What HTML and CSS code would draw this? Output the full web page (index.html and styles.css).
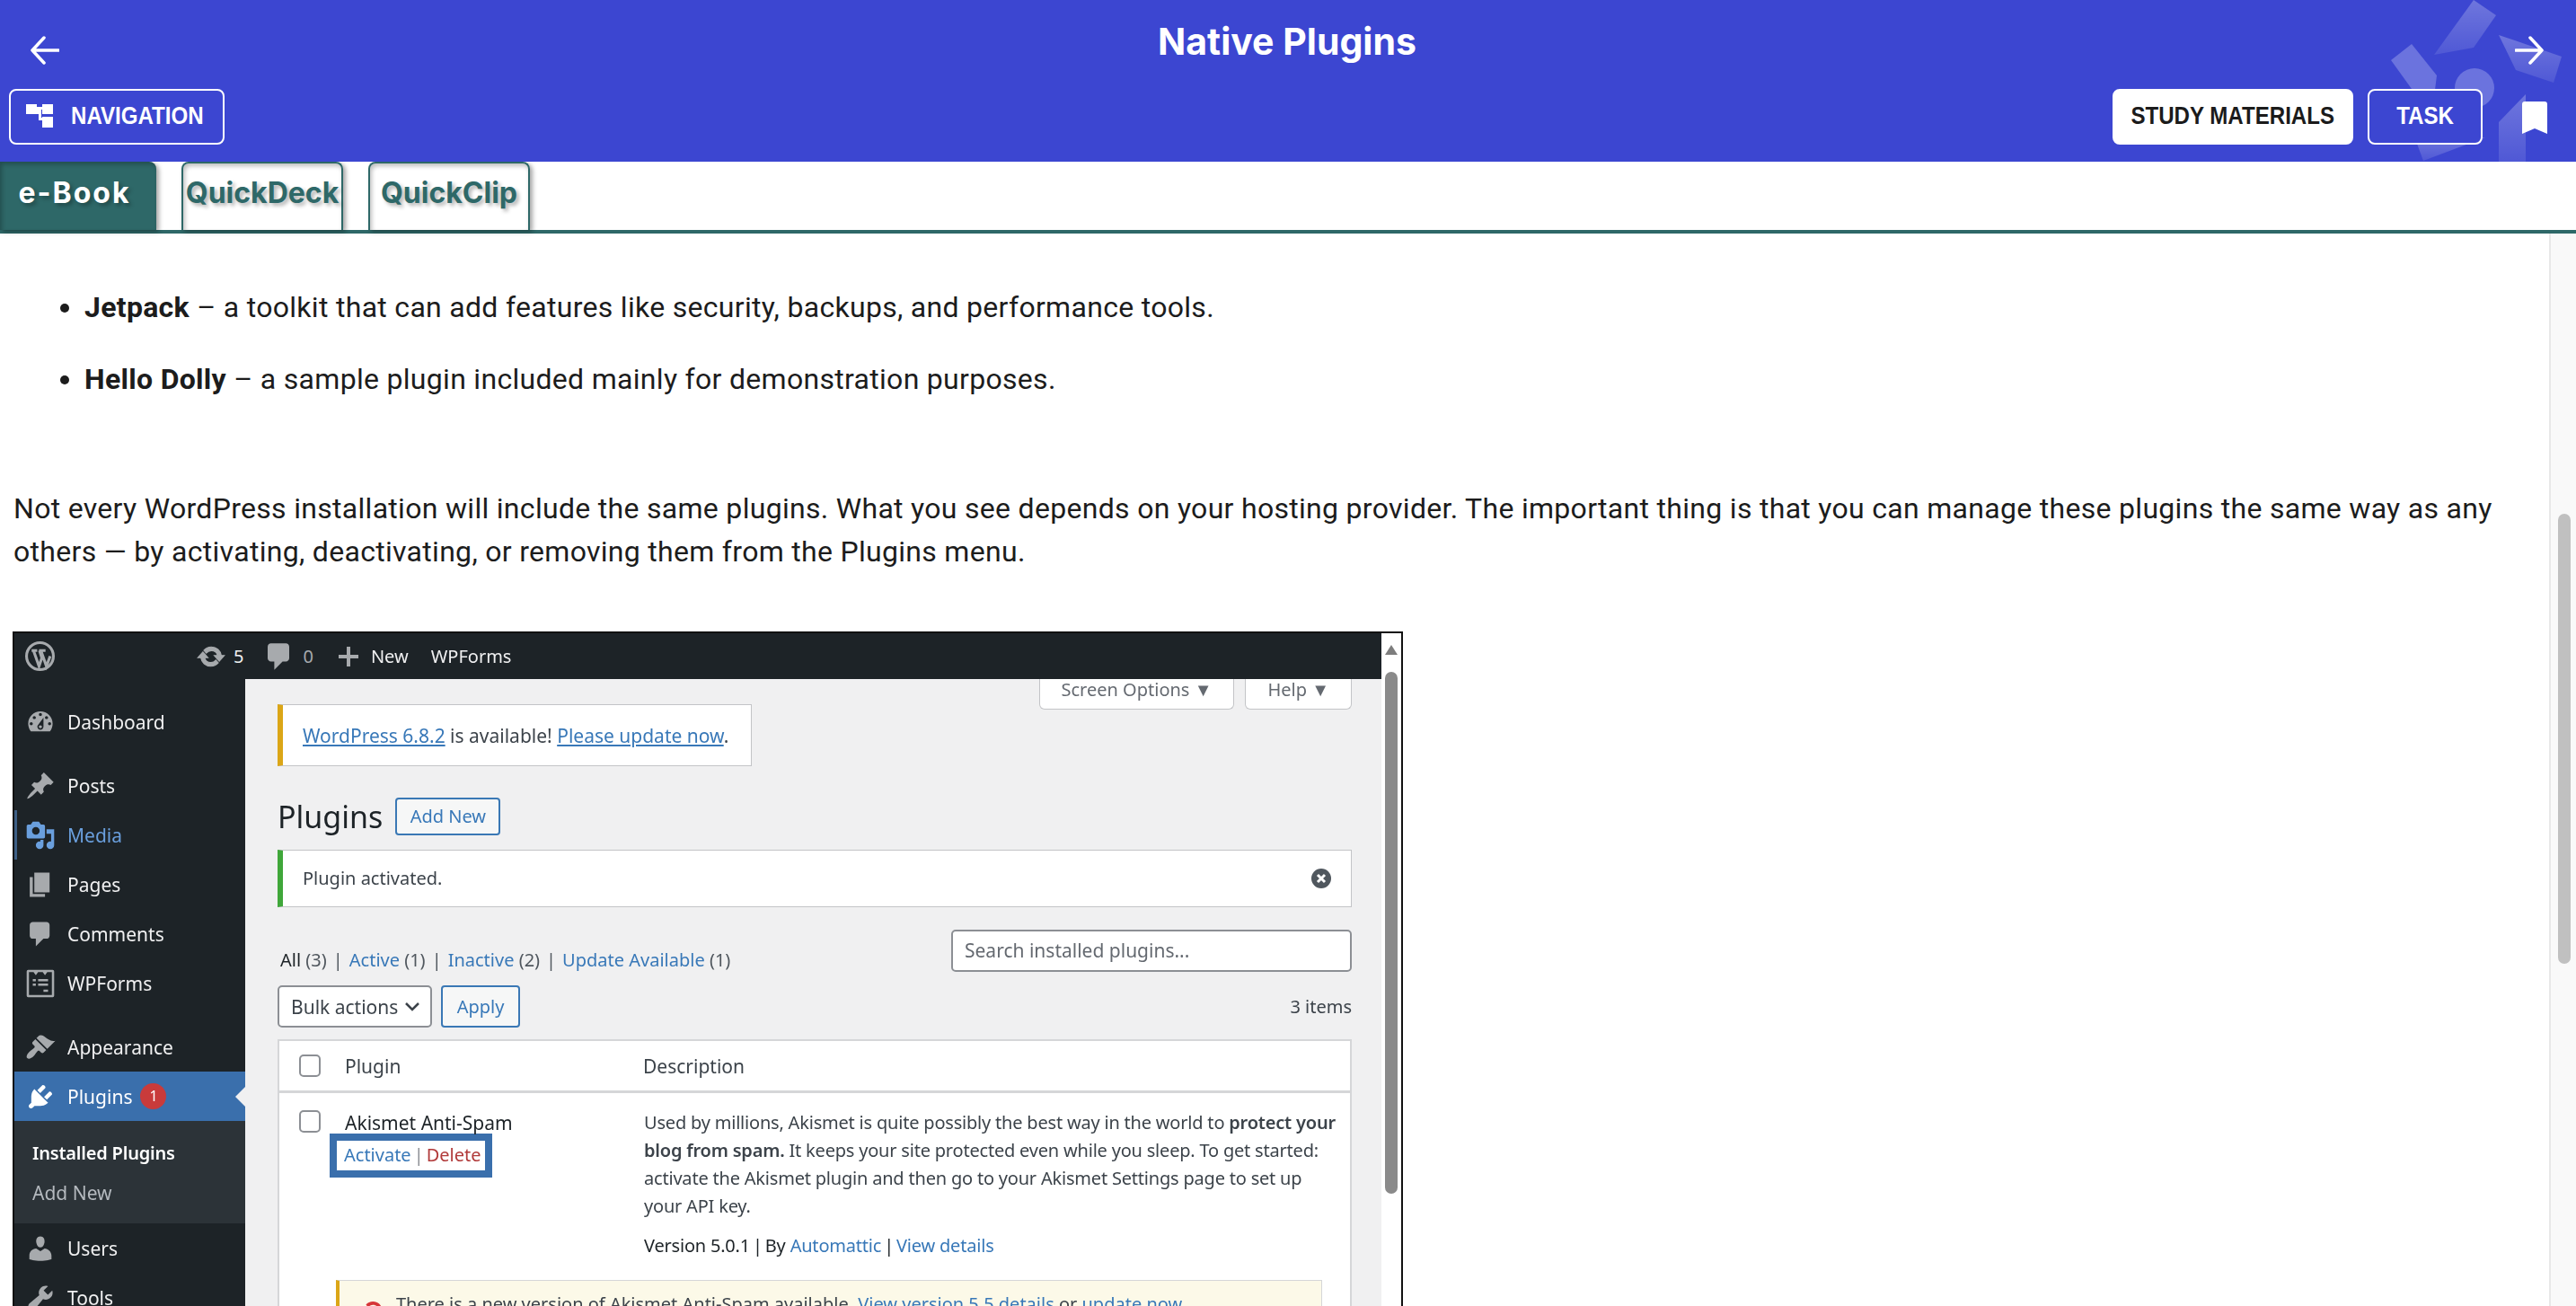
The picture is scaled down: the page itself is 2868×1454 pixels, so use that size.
FILE: index.html
```html
<!DOCTYPE html>
<html lang="en">

<head>
  <meta charset="UTF-8" />
  <meta name="viewport" content="width=device-width, initial-scale=1.0" />
  <title>Native Plugins</title>
  <link rel="stylesheet" href="styles.css">
</head>

<body>
  <header class="topbar">
    <svg class="decor" viewBox="0 0 230 180" aria-hidden="true">
      <defs>
        <linearGradient id="fade" x1="0" y1="0" x2="0" y2="1">
          <stop offset="0" stop-color="#fff" stop-opacity="0.26" />
          <stop offset="1" stop-color="#fff" stop-opacity="0.1" />
        </linearGradient>
      </defs>
      <path d="M116 0l25 17-25 36-44 8z" fill="url(#fade)" />
      <path d="M144 39l70 24-9 29-42-14z" fill="url(#fade)" />
      <path d="M47 49l28 35-2 16-26-1-23-32z" fill="#6b73de" />
      <circle cx="117" cy="98" r="22" fill="#6b73de" />
      <path d="M174 105v75h-30v-44z" fill="url(#fade)" />
      <path d="M129 153l-69 26-7-19z" fill="url(#fade)" />
    </svg>
    <div class="toprow">
      <button class="arrow" aria-label="Back">
        <svg viewBox="0 0 32 32" width="32" height="32"><path d="M31 16H2M15 2L2 16l13 14" /></svg>
      </button>
      <h1>Native Plugins</h1>
      <button class="arrow" aria-label="Next">
        <svg viewBox="0 0 32 32" width="32" height="32"><path d="M1 16h29M17 2l13 14-13 14" /></svg>
      </button>
    </div>
    <div class="actions">
      <button class="btn btn-nav">
        <svg viewBox="0 0 30 26" width="30" height="26"><path d="M0 0h12v3h6V0h12v11H18V6h-1v9h1v-1h12v12H18v-8h-4V11h-2H0z" /></svg>
        <span>NAVIGATION</span>
      </button>
      <div class="actions-right">
        <button class="btn btn-solid"><span>STUDY MATERIALS</span></button>
        <button class="btn btn-task"><span>TASK</span></button>
        <svg class="bookmark" viewBox="0 0 28 36" width="28" height="36"><path d="M3 0h22a3 3 0 0 1 3 3v33l-14-6-14 6V3a3 3 0 0 1 3-3z" /></svg>
      </div>
    </div>
  </header>

  <nav class="tabs">
    <a class="tab active">e-Book</a>
    <a class="tab">QuickDeck</a>
    <a class="tab">QuickClip</a>
  </nav>

  <main class="page">
    <article class="content">
      <ul class="bullets">
        <li><b>Jetpack</b> – a toolkit that can add features like security, backups, and performance tools.</li>
        <li><b>Hello Dolly</b> – a sample plugin included mainly for demonstration purposes.</li>
      </ul>
      <p class="lead">Not every WordPress installation will include the same plugins. What you see depends on your hosting provider. The important thing is that you can manage these plugins the same way as any others — by activating, deactivating, or removing them from the Plugins menu.</p>

      <figure class="shot">
        <div class="wp">
          <div class="adminbar">
            <svg class="wp-logo" viewBox="0 0 32 32" width="33" height="33"><circle cx="16" cy="16" r="14.500" /><path d="M7 10h6M15 10h7M9 10l6 17 3-9-2.500-8M17 10l6 17 4-11" /></svg>
            <svg class="bar-update" viewBox="0 0 20 20" width="32" height="32"><path d="M10.200 3.280c3.530 0 6.430 2.610 6.920 6h2.080l-3.500 4-3.500-4h2.320c-.45-1.970-2.210-3.450-4.320-3.450-1.450 0-2.730.71-3.540 1.780L4.950 5.660C6.230 4.200 8.110 3.280 10.200 3.280zm-.4 13.440c-3.520 0-6.430-2.610-6.920-6H.8l3.500-4c1.170 1.330 2.330 2.670 3.500 4H5.480c.45 1.970 2.210 3.450 4.320 3.450 1.450 0 2.730-.71 3.540-1.780l1.710 1.950c-1.280 1.460-3.150 2.380-5.250 2.380z" /></svg>
            <span class="bar-num">5</span>
            <svg class="bar-comment" viewBox="3 2 13 16" width="24" height="30"><path d="M5 2h9c1.100 0 2 .9 2 2v7c0 1.100-.9 2-2 2h-2l-5 5v-5H5c-1.100 0-2-.9-2-2V4c0-1.100.9-2 2-2z" /></svg>
            <span class="bar-num dim">0</span>
            <svg class="bar-plus" viewBox="0 0 22 22" width="22" height="22"><path d="M9 0h4v9h9v4h-9v9H9v-9H0V9h9z" /></svg>
            <span class="bar-new">New</span>
            <span class="bar-forms">WPForms</span>
          </div>
          <div class="wp-body">
            <aside class="side">
              <div class="side-item"><svg viewBox="0 0 20 20"><path d="M3.760 16h12.480c1.100-1.370 1.760-3.110 1.760-5 0-4.420-3.580-8-8-8s-8 3.580-8 8c0 1.890.66 3.630 1.760 5zM10 4c.55 0 1 .45 1 1s-.45 1-1 1-1-.45-1-1 .45-1 1-1zM6 6c.55 0 1 .45 1 1s-.45 1-1 1-1-.45-1-1 .45-1 1-1zm8 0c.55 0 1 .45 1 1s-.45 1-1 1-1-.45-1-1 .45-1 1-1zm-5.370 5.550L12 7v6c0 1.100-.9 2-2 2s-2-.9-2-2c0-.57.24-1.080.63-1.450zM4 10c.55 0 1 .45 1 1s-.45 1-1 1-1-.45-1-1 .45-1 1-1zm12 0c.55 0 1 .45 1 1s-.45 1-1 1-1-.45-1-1 .45-1 1-1zm-5 3c0-.55-.45-1-1-1s-1 .45-1 1 .45 1 1 1 1-.45 1-1z" /></svg>Dashboard</div>
              <div class="side-item gap"><svg viewBox="0 0 20 20"><path d="M10.440 3.020l1.820-1.820 6.360 6.350-1.830 1.820c-1.050-.68-2.480-.57-3.410.36l-.75.75c-.92.93-1.040 2.350-.35 3.410l-1.830 1.820-2.410-2.410-2.800 2.790c-.42.42-3.380 2.710-3.800 2.290s1.860-3.390 2.280-3.810l2.790-2.790L4.100 9.360l1.830-1.820c1.050.69 2.480.57 3.400-.36l.75-.75c.93-.92 1.050-2.350.36-3.410z" /></svg>Posts</div>
              <div class="side-item media"><svg viewBox="0 0 20 20"><path d="M13 11V4c0-.55-.45-1-1-1h-1.670L9 1H5L3.670 3H2c-.55 0-1 .45-1 1v7c0 .55.45 1 1 1h10c.55 0 1-.45 1-1zM7 4.500c1.380 0 2.500 1.120 2.500 2.500S8.380 9.500 7 9.500 4.500 8.380 4.500 7 5.620 4.500 7 4.500zM14 6h5v10.500c0 1.380-1.120 2.500-2.500 2.500S14 17.880 14 16.500s1.120-2.500 2.500-2.500c.17 0 .34.02.5.05V9h-3V6zm-4 8.050V13h2v3.500c0 1.380-1.120 2.500-2.500 2.500S7 17.880 7 16.500 8.120 14 9.500 14c.17 0 .34.02.5.05z" /></svg>Media</div>
              <div class="side-item"><svg viewBox="0 0 20 20"><path d="M6 15V2h10v13H6zm-1 1h8v2H3V5h2v11z" /></svg>Pages</div>
              <div class="side-item"><svg viewBox="0 0 20 20"><path d="M5 2h9c1.100 0 2 .9 2 2v7c0 1.100-.9 2-2 2h-2l-5 5v-5H5c-1.100 0-2-.9-2-2V4c0-1.100.9-2 2-2z" /></svg>Comments</div>
              <div class="side-item"><svg viewBox="0 0 20 20"><path fill-rule="evenodd" d="M2 1h16a1 1 0 0 1 1 1v16a1 1 0 0 1-1 1H2a1 1 0 0 1-1-1V2a1 1 0 0 1 1-1zm.500 1.500v15h15v-15h-3L13 4.500 11.500 2.500h-3L7 4.500 5.500 2.500zM5 7h2v1.500H5zm3.500 0H15v1.500H8.500zM5 10h2v1.500H5zm3.500 0H15v1.500H8.500zM12 14h3v1.500h-3z" /></svg>WPForms</div>
              <div class="side-item gap"><svg viewBox="0 0 20 20"><path d="M14.480 11.060L7.410 3.990l1.500-1.500c.5-.56 2.300-.47 3.510.32 1.210.8 1.430 1.280 2.910 2.100 1.180.64 2.450 1.260 4.450.85zm-.71.71L6.700 4.700 4.930 6.470c-.39.39-.39 1.020 0 1.410l1.060 1.060c.39.39.39 1.030 0 1.420-.6.6-1.430 1.110-2.210 1.690-.35.26-.7.53-1.010.84C1.430 14.230.4 16.080 1.400 17.070c.99 1 2.840-.03 4.180-1.360.31-.31.58-.66.85-1.020.57-.78 1.080-1.610 1.690-2.210.39-.39 1.020-.39 1.410 0l1.060 1.060c.39.39 1.020.39 1.410 0z" /></svg>Appearance</div>
              <div class="side-item current"><svg viewBox="0 0 20 20"><path d="M13.110 4.360L9.870 7.600 8 5.730l3.240-3.240c.35-.34 1.050-.2 1.560.32.52.51.66 1.210.31 1.550zm-8 1.770l.91-1.120 9.010 9.010-1.190.84c-.71.71-2.630 1.160-3.820 1.160H6.140L4.900 17.260c-.59.59-1.540.59-2.120 0-.59-.58-.59-1.530 0-2.120l1.240-1.240v-3.880c0-1.130.4-3.190 1.090-3.890zm7.260 3.970l3.240-3.240c.34-.35 1.040-.21 1.550.31.52.51.66 1.210.31 1.550l-3.240 3.250z" /></svg>Plugins<span class="count">1</span></div>
              <div class="submenu">
                <div class="sub-item strong">Installed Plugins</div>
                <div class="sub-item">Add New</div>
              </div>
              <div class="side-item"><svg viewBox="0 0 20 20"><path d="M10 9.250c-2.270 0-2.730-3.440-2.730-3.440C7 4.020 7.820 2 9.970 2c2.160 0 2.980 2.020 2.710 3.810 0 0-.41 3.440-2.680 3.440zm0 2.570L12.720 10c2.390 0 4.520 2.330 4.520 4.530v2.490s-3.650 1.130-7.240 1.130c-3.650 0-7.240-1.130-7.240-1.130v-2.490c0-2.250 1.940-4.480 4.470-4.480z" /></svg>Users</div>
              <div class="side-item"><svg viewBox="0 0 20 20"><path d="M16.680 9.770c-1.340 1.340-3.300 1.670-4.950.99l-5.410 6.520c-.99.99-2.590.99-3.580 0s-.99-2.590 0-3.570l6.520-5.420c-.68-1.650-.35-3.610.99-4.950 1.280-1.280 3.120-1.620 4.720-1.060l-2.890 2.890 2.820 2.820 2.860-2.870c.53 1.580.18 3.390-1.080 4.650z" /></svg>Tools</div>
            </aside>

            <section class="wp-main">
              <div class="screen-tabs">
                <span class="screen-tab">Screen Options ▼</span>
                <span class="screen-tab">Help ▼</span>
              </div>
              <div class="notice notice-update"><a>WordPress 6.8.2</a> is available! <a>Please update now</a>.</div>
              <div class="title-row">
                <h2>Plugins</h2>
                <span class="wp-btn add-new">Add New</span>
              </div>
              <div class="notice notice-ok">
                <span>Plugin activated.</span>
                <svg viewBox="0 0 22 22" width="22" height="22"><circle cx="11" cy="11" r="11" fill="#50575e" /><path d="M7 7l8 8M15 7l-8 8" stroke="#fff" stroke-width="3" /></svg>
              </div>
              <div class="filter-row">
                <div class="filters"><b>All</b> (3)<span class="sep">|</span><a>Active</a> (1)<span class="sep">|</span><a>Inactive</a> (2)<span class="sep">|</span><a>Update Available</a> (1)</div>
                <div class="search">Search installed plugins...</div>
              </div>
              <div class="bulk-row">
                <span class="select">Bulk actions
                  <svg viewBox="0 0 16 10" width="16" height="10"><path d="M1 1l7 7 7-7" /></svg>
                </span>
                <span class="wp-btn apply">Apply</span>
                <span class="items">3 items</span>
              </div>
              <div class="plugin-table">
                <div class="table-head">
                  <i class="check"></i>
                  <span class="col-name">Plugin</span>
                  <span>Description</span>
                </div>
                <div class="table-row">
                  <i class="check check-row"></i>
                  <div class="col-name">
                    <div class="plugin-name">Akismet Anti-Spam</div>
                    <div class="row-actions"><a>Activate</a><span class="tight">|</span><span class="delete">Delete</span></div>
                  </div>
                  <div class="plugin-desc">
                    <p>Used by millions, Akismet is quite possibly the best way in the world to <b>protect your<br>blog from spam.</b> It keeps your site protected even while you sleep. To get started:<br>activate the Akismet plugin and then go to your Akismet Settings page to set up<br>your API key.</p>
                    <p class="version">Version 5.0.1<span class="tight">|</span>By <a>Automattic</a><span class="tight">|</span><a>View details</a></p>
                  </div>
                </div>
                <div class="update-note">
                  <svg viewBox="0 0 20 20" width="30" height="30"><path d="M10.200 3.280c3.530 0 6.430 2.610 6.920 6h2.080l-3.500 4-3.500-4h2.320c-.45-1.970-2.210-3.450-4.320-3.450-1.450 0-2.730.71-3.540 1.780L4.950 5.660C6.230 4.200 8.110 3.280 10.200 3.280zm-.4 13.440c-3.520 0-6.430-2.610-6.920-6H.8l3.500-4c1.170 1.330 2.330 2.670 3.500 4H5.480c.45 1.970 2.210 3.450 4.320 3.450 1.450 0 2.730-.71 3.540-1.780l1.710 1.950c-1.280 1.460-3.150 2.380-5.250 2.380z" /></svg>
                  <span>There is a new version of Akismet Anti-Spam available. <a>View version 5.5 details</a> or <a>update now</a>.</span>
                </div>
              </div>
            </section>
          </div>
        </div>
        <div class="shot-scroll">
          <i class="up"></i>
          <i class="thumb"></i>
        </div>
      </figure>
    </article>

    <div class="scroll">
      <i class="scroll-thumb"></i>
    </div>
  </main>
</body>

</html>
```

FILE: styles.css
```css
* {
  margin: 0;
  padding: 0;
  box-sizing: border-box;
}

html,
body {
  height: 100vh;
  overflow: hidden;
}

body {
  display: flex;
  flex-direction: column;
  background: #fff;
  color: #1c1c1c;
  font-family: Roboto, sans-serif;
}

button {
  font-family: inherit;
  cursor: pointer;
}

/* top bar */
.topbar {
  position: relative;
  height: 180px;
  flex-shrink: 0;
  background: #3c46d1;
  overflow: hidden;
}

.decor {
  position: absolute;
  top: 0;
  right: 0;
  width: 230px;
  height: 180px;
}

.toprow {
  position: relative;
  display: flex;
  justify-content: space-between;
  height: 99px;
  padding: 40px 36px 0 34px;
}

.toprow h1 {
  margin-top: -18px;
  color: #fff;
  font-family: Inter, sans-serif;
  font-size: 41px;
  font-weight: 700;
  line-height: 48px;
}

.arrow {
  width: 32px;
  height: 32px;
  background: none;
  border: 0;
}

.arrow path {
  fill: none;
  stroke: #fff;
  stroke-width: 3.500;
  stroke-linecap: round;
  stroke-linejoin: round;
}

.actions {
  position: relative;
  display: flex;
  justify-content: space-between;
  padding: 0 32px 0 10px;
}

.actions-right {
  display: flex;
  align-items: center;
  gap: 16px;
}

.btn {
  display: flex;
  align-items: center;
  justify-content: center;
  height: 62px;
  padding-bottom: 3px;
  border: 2px solid #fff;
  border-radius: 8px;
  background: #3c46d1;
  color: #fff;
  font-family: "Liberation Sans", sans-serif;
  font-size: 28px;
  font-weight: 700;
  white-space: nowrap;
}

/* the buttons use a condensed face, no such font installed */
.btn span {
  display: inline-block;
  transform: scaleX(0.86);
}

.btn-nav {
  justify-content: flex-start;
  width: 240px;
  padding-left: 17px;
  gap: 20px;
}

.btn-nav span {
  transform-origin: left center;
}

.btn-nav svg {
  fill: #fff;
  flex-shrink: 0;
}

.btn-solid {
  width: 268px;
  background: #fff;
  color: #1b1b1b;
}

.btn-task {
  width: 128px;
}

.bookmark {
  margin: 2px 0 0 28px;
  fill: #fff;
}

/* tabs */
.tabs {
  display: flex;
  flex-shrink: 0;
  gap: 28px;
  height: 80px;
  border-bottom: 4px solid #2e6868;
}

.tab {
  width: 180px;
  height: 76px;
  padding-top: 10px;
  border: 2px solid #2e6868;
  border-bottom-width: 0;
  border-radius: 8px 8px 0 0;
  box-shadow: 3px 2px 5px rgba(0, 0, 0, 0.35), inset 2px 3px 5px rgba(0, 0, 0, 0.25);
  color: #2e6868;
  font-family: Inter, sans-serif;
  font-size: 32px;
  font-weight: 700;
  line-height: 46px;
  text-align: center;
  text-shadow: 3px 3px 4px rgba(0, 0, 0, 0.3);
  white-space: nowrap;
}

.tab.active {
  width: 174px;
  padding: 12px 8px 0 0;
  border: 0;
  border-radius: 0 8px 0 0;
  background: #2e6868;
  color: #fff;
  letter-spacing: 2px;
}

/* article */
.page {
  display: flex;
  flex: 1;
  min-height: 0;
}

.content {
  flex: 1;
  min-width: 0;
  padding: 0 60px 0 15px;
  font-size: 32px;
  line-height: 48px;
  letter-spacing: 0.3px;
}

.bullets {
  padding: 58px 0 0 79px;
}

.bullets li {
  margin-bottom: 32px;
}

.bullets b {
  font-weight: 700;
}

.lead {
  margin-top: 96px;
}

.shot {
  display: flex;
  width: 1548px;
  margin: 65px 0 0 -1px;
  border: 2px solid #111;
  font-family: "Noto Sans", sans-serif;
  font-size: 21px;
  line-height: 30px;
  letter-spacing: 0;
  color: #3c434a;
  filter: blur(0.5px);
}

.wp {
  flex: 1;
  min-width: 0;
}

.adminbar {
  display: flex;
  align-items: center;
  height: 51px;
  background: #1d2327;
  color: #f0f0f1;
  font-size: 20px;
}

.adminbar svg {
  flex-shrink: 0;
  fill: #a7aaad;
}

.wp-logo {
  margin-left: 12px;
}

.wp-logo circle,
.wp-logo path {
  fill: none;
  stroke: #a7aaad;
  stroke-width: 3;
}

.bar-update {
  margin-left: 158px;
  stroke: #a7aaad;
  stroke-width: 0.700;
}

.bar-num {
  margin-left: 9px;
}

.bar-num.dim {
  margin-left: 15px;
  color: #a7aaad;
}

.bar-comment {
  margin-left: 27px;
}

.bar-plus {
  margin-left: 28px;
}

.bar-new {
  margin-left: 14px;
}

.bar-forms {
  margin-left: 25px;
}

.wp-body {
  display: flex;
}

.side {
  width: 257px;
  flex-shrink: 0;
  padding-top: 20px;
  background: #1d2327;
  color: #f0f0f1;
}

.side-item {
  position: relative;
  display: flex;
  align-items: center;
  gap: 13px;
  height: 55px;
  padding-left: 12px;
}

.side-item svg {
  width: 34px;
  height: 34px;
  flex-shrink: 0;
  fill: #a7aaad;
}

.side-item.gap {
  margin-top: 16px;
}

.side-item.media {
  border-left: 3px solid #3d5f86;
  padding-left: 9px;
  color: #6a9fdd;
}

.side-item.media svg {
  fill: #6a9fdd;
}

.side-item.current {
  background: #3a6fac;
  color: #fff;
}

.side-item.current svg {
  fill: #fff;
}

/* the notch pointing at the page */
.side-item.current::after {
  content: "";
  position: absolute;
  right: 0;
  top: 17px;
  border: 11px solid transparent;
  border-right-color: #f0f0f1;
  border-left-width: 0;
}

.count {
  width: 29px;
  height: 29px;
  margin-left: -4px;
  border-radius: 50%;
  background: #c93b3b;
  font-size: 16px;
  line-height: 29px;
  text-align: center;
}

.submenu {
  padding: 13px 0 11px;
  background: #2c3338;
}

.sub-item {
  height: 45px;
  padding-left: 20px;
  color: #b4b9be;
  line-height: 45px;
}

.sub-item.strong {
  color: #fff;
  font-size: 20px;
  font-weight: 600;
  letter-spacing: -0.2px;
}

.wp-main {
  flex: 1;
  min-width: 0;
  height: 720px;
  padding: 0 33px 0 36px;
  background: #f0f0f1;
}

.screen-tabs {
  display: flex;
  justify-content: flex-end;
  gap: 12px;
  height: 34px;
  font-size: 20px;
}

.screen-tab {
  padding: 0 24px;
  border: 1px solid #c3c4c7;
  border-top: 0;
  border-radius: 0 0 6px 6px;
  background: #fff;
  color: #646970;
  line-height: 24px;
}

.notice {
  display: flex;
  align-items: center;
  border: 1px solid #c3c4c7;
  border-left-width: 6px;
  background: #fff;
  padding-left: 22px;
}

.notice a,
.plugin-table a,
.filters a,
.row-actions a {
  color: #3878b8;
}

.notice-update {
  display: block;
  width: 528px;
  height: 69px;
  margin-top: -6px;
  border-left-color: #dba617;
  line-height: 68px;
}

.notice-update a {
  text-decoration: underline;
}

.notice-ok {
  justify-content: space-between;
  height: 64px;
  margin-top: 16px;
  padding-right: 22px;
  border-left-color: #3fa73a;
  font-size: 20px;
}

.title-row {
  display: flex;
  align-items: center;
  gap: 14px;
  height: 42px;
  margin-top: 35px;
}

.title-row h2 {
  color: #1d2327;
  font-size: 34px;
  font-weight: 400;
}

.wp-btn {
  display: block;
  border: 2px solid #3a78b5;
  border-radius: 4px;
  background: #f6f7f7;
  color: #3878b8;
  font-size: 20px;
  text-align: center;
}

.add-new {
  width: 117px;
  height: 42px;
  line-height: 38px;
}

.filter-row {
  display: flex;
  align-items: center;
  justify-content: space-between;
  height: 47px;
  margin-top: 25px;
}

.filters {
  margin-top: 21px;
  padding-left: 3px;
  color: #50575e;
  font-size: 20px;
}

.filters b {
  color: #1d2327;
  font-weight: 400;
}

.sep {
  margin: 0 7px;
}

.search {
  width: 446px;
  height: 47px;
  padding-left: 13px;
  border: 2px solid #8c8f94;
  border-radius: 5px;
  background: #fff;
  color: #646970;
  line-height: 43px;
}

.bulk-row {
  display: flex;
  align-items: center;
  height: 47px;
  margin-top: 15px;
}

.select {
  display: flex;
  align-items: center;
  justify-content: space-between;
  width: 172px;
  height: 47px;
  padding: 0 12px 0 13px;
  border: 2px solid #8c8f94;
  border-radius: 5px;
  background: #fff;
}

.select svg {
  fill: none;
  stroke: #3c434a;
  stroke-width: 2.500;
}

.apply {
  width: 88px;
  height: 47px;
  margin-left: 10px;
  line-height: 43px;
}

.items {
  margin-left: auto;
  color: #3c434a;
  font-size: 20px;
}

.plugin-table {
  margin-top: 13px;
  border: 2px solid #d5d6d8;
  background: #fff;
}

.table-head {
  display: flex;
  align-items: center;
  height: 58px;
  padding-left: 22px;
  border-bottom: 3px solid #d5d6d8;
}

.check {
  display: block;
  width: 24px;
  height: 25px;
  flex-shrink: 0;
  border: 2px solid #8c8f94;
  border-radius: 5px;
  background: #fff;
}

.check-row {
  margin-top: 2px;
}

.col-name {
  width: 332px;
  flex-shrink: 0;
  margin-left: 27px;
}

.table-row {
  display: flex;
  padding: 17px 0 0 22px;
}

.plugin-name {
  margin: 1px 0 -3px;
  color: #1d2327;
}

.row-actions {
  width: 181px;
  height: 49px;
  margin-left: -17px;
  padding-left: 8px;
  border: 8px solid #3a6fac;
  white-space: nowrap;
  font-size: 20px;
  line-height: 31px;
}

.tight {
  margin: 0 3px;
  color: #8c8f94;
}

.version .tight {
  color: #1d2327;
}

.delete {
  color: #b13a3a;
}

.plugin-desc {
  margin-top: 0;
  margin-left: 1px;
  font-size: 20px;
  line-height: 31px;
  letter-spacing: -0.2px;
  white-space: nowrap;
}

.plugin-desc b {
  font-weight: 600;
}

.version {
  margin-top: 13px;
  color: #1d2327;
}

.update-note {
  display: flex;
  gap: 11px;
  width: 1098px;
  height: 60px;
  margin: 23px 0 0 63px;
  padding: 11px 0 0 22px;
  border: 1px solid #d5d6d8;
  border-left: 4px solid #dba617;
  background: #fcf9e8;
  font-size: 20px;
  white-space: nowrap;
}

.update-note svg {
  flex-shrink: 0;
  margin-top: 7px;
  fill: #d63638;
}

.shot-scroll {
  position: relative;
  width: 22px;
  flex-shrink: 0;
  background: #fff;
}

.up {
  display: block;
  width: 0;
  margin: 13px auto 0;
  border: 7px solid transparent;
  border-top-width: 0;
  border-bottom: 11px solid #7d7d7d;
}

.thumb {
  display: block;
  width: 14px;
  height: 581px;
  margin: 19px auto 0;
  border-radius: 7px;
  background: #8a8a8a;
}

/* page scrollbar */
.scroll {
  width: 30px;
  flex-shrink: 0;
  padding: 312px 6px 0 8px;
  border-left: 2px solid #e8e8e8;
  background: #f9f9f9;
}

.scroll-thumb {
  display: block;
  height: 501px;
  border-radius: 8px;
  background: #c0c0c0;
}
```
